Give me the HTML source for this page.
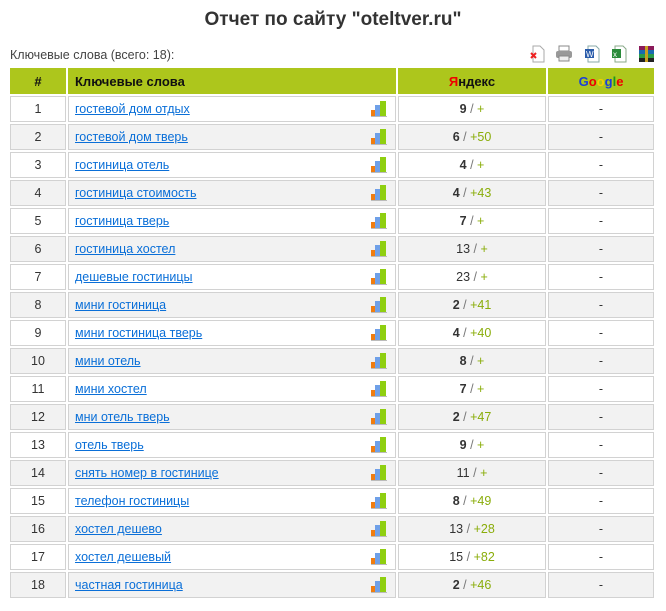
<!DOCTYPE html>
<html><head><meta charset="utf-8"><style>
body{margin:0;background:#fff;font-family:"Liberation Sans","DejaVu Sans",sans-serif;font-size:12.5px;color:#333;width:666px;height:611px;overflow:hidden;position:relative}
h1{position:absolute;top:9px;left:0;width:666px;text-align:center;margin:0;font-size:19px;font-weight:bold;color:#333;letter-spacing:0}
.sub{position:absolute;left:10px;top:48px;font-size:12.5px;color:#444}
.icons{position:absolute;top:45px;left:528px}
.icons svg{position:absolute;top:0}
table{position:absolute;left:8px;top:66px;width:648px;border-collapse:separate;border-spacing:2px;table-layout:fixed}
td,th{border:1px solid #d2d2d2;height:24px;padding:0;box-sizing:border-box}
th{background:#adc61c;border-color:#adc61c;font-weight:bold;color:#111;font-size:13px;height:26px}
td{height:26px}
tr:nth-child(odd) td{background:#f2f2f2}
td.n{text-align:center}
td.k{padding-left:6px;position:relative}
td.k a{color:#0a6fd8;text-decoration:underline}
td.y,td.g{text-align:center}
.s{color:#777}
.p{color:#8aad0a}
.b{font-weight:bold}
.bar{position:absolute;right:8px;top:4px;width:16px;height:16px}
</style></head><body>
<h1>Отчет по сайту "oteltver.ru"</h1>
<div class="sub">Ключевые слова (всего: 18):</div>
<div class="icons">
<svg style="left:0" width="18" height="18"><path d="M5 1h7l4 4v12H5z" fill="#fff" stroke="#aaa"/><path d="M3 8l5 5M8 8l-5 5" stroke="#e22" stroke-width="2"/></svg>
<svg style="left:27px" width="18" height="18"><rect x="4" y="1" width="10" height="5" fill="#fff" stroke="#888"/><rect x="1" y="6" width="16" height="7" rx="2" fill="#999"/><rect x="4" y="11" width="10" height="5" fill="#eee" stroke="#888"/></svg>
<svg style="left:55px" width="18" height="18"><path d="M5 1h8l3 3v13H5z" fill="#fff" stroke="#8aa"/><rect x="2" y="4" width="9" height="9" fill="#2a5caa"/><text x="3" y="12" font-size="8" fill="#fff" font-family="Liberation Sans">W</text></svg>
<svg style="left:82px" width="18" height="18"><path d="M5 1h8l3 3v13H5z" fill="#fff" stroke="#8a8"/><rect x="2" y="4" width="9" height="9" fill="#2a8a3a"/><text x="3" y="12" font-size="8" fill="#fff" font-family="Liberation Sans">x</text></svg>
<svg style="left:110px" width="18" height="18"><rect x="1" y="1" width="15" height="4" fill="#8a1a5a"/><rect x="1" y="5" width="15" height="4" fill="#1a6ab0"/><rect x="1" y="9" width="15" height="4" fill="#2a9a4a"/><rect x="1" y="13" width="15" height="4" fill="#222"/><rect x="7" y="1" width="3" height="16" fill="#c9a020"/></svg>
</div>
<table>
<colgroup><col style="width:56px"><col style="width:328px"><col style="width:148px"><col></colgroup>
<tr><th>#</th><th style="text-align:left;padding-left:6px">Ключевые слова</th><th><span style="color:#e00">Я</span>ндекс</th><th><span style="color:#1a3fd8">G</span><span style="color:#e00">o</span><span style="color:#f5d000">o</span><span style="color:#1a3fd8">g</span><span style="color:#1a9a1a">l</span><span style="color:#e00">e</span></th></tr>
</table>
<script>
var d=[["гостевой дом отдых","9",1,"+"],["гостевой дом тверь","6",1,"+50"],["гостиница отель","4",1,"+"],["гостиница стоимость","4",1,"+43"],["гостиница тверь","7",1,"+"],["гостиница хостел","13",0,"+"],["дешевые гостиницы","23",0,"+"],["мини гостиница","2",1,"+41"],["мини гостиница тверь","4",1,"+40"],["мини отель","8",1,"+"],["мини хостел","7",1,"+"],["мни отель тверь","2",1,"+47"],["отель тверь","9",1,"+"],["снять номер в гостинице","11",0,"+"],["телефон гостиницы","8",1,"+49"],["хостел дешево","13",0,"+28"],["хостел дешевый","15",0,"+82"],["частная гостиница","2",1,"+46"]];
var bar='<svg class="bar" viewBox="0 0 16 16"><rect x="0" y="9" width="4" height="6" fill="#f07d10"/><rect x="4" y="4" width="5" height="11" fill="#6fa0e8"/><rect x="9" y="0" width="6" height="15" fill="#8fcf10"/><rect x="0" y="15" width="16" height="1" fill="#bbb"/></svg>';
var h='';d.forEach(function(r,i){h+='<tr><td class="n">'+(i+1)+'</td><td class="k"><a href="#">'+r[0]+'</a>'+bar+'</td><td class="y"><span class="'+(r[2]?'b':'')+'">'+r[1]+'</span> <span class="s">/</span> <span class="p">'+r[3]+'</span></td><td class="g">-</td></tr>';});
document.querySelector('table tbody').insertAdjacentHTML('beforeend',h);
</script>
</body></html>
